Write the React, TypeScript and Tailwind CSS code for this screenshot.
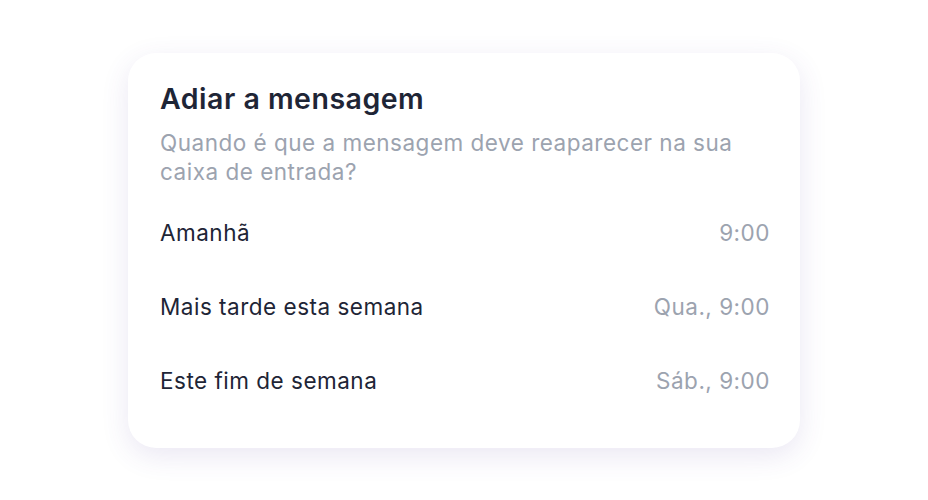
const options = [
  { label: "Amanhã", time: "9:00" },
  { label: "Mais tarde esta semana", time: "Qua., 9:00" },
  { label: "Este fim de semana", time: "Sáb., 9:00" },
];

export default function App() {
  return (
    <div
      className="flex h-[500px] w-full items-center justify-center bg-white"
      style={{ fontFamily: "Inter, 'Noto Sans', sans-serif" }}
    >
      <div className="w-[672px] rounded-[28px] bg-white pl-8 pr-[30px] pt-7 pb-[30px] shadow-[0_8px_28px_rgba(80,60,160,0.12)]">
        <h2 className="text-[28.5px] font-semibold leading-[36px] tracking-[0.5px] text-[#1e2536]">
          Adiar a mensagem
        </h2>
        <p className="mt-[11px] text-[22.5px] leading-[29px] tracking-[0.5px] text-[#9ca3af]">
          Quando é que a mensagem deve reaparecer na sua caixa de entrada?
        </p>
        <div className="mt-[10px] flex flex-col">
          {options.map((o) => (
            <div
              key={o.label}
              className="flex items-center justify-between py-6 text-[22.5px] leading-[26px] tracking-[0.5px]"
            >
              <span className="text-[#1e2536]">{o.label}</span>
              <span className="text-[#9ca3af]">{o.time}</span>
            </div>
          ))}
        </div>
      </div>
    </div>
  );
}
